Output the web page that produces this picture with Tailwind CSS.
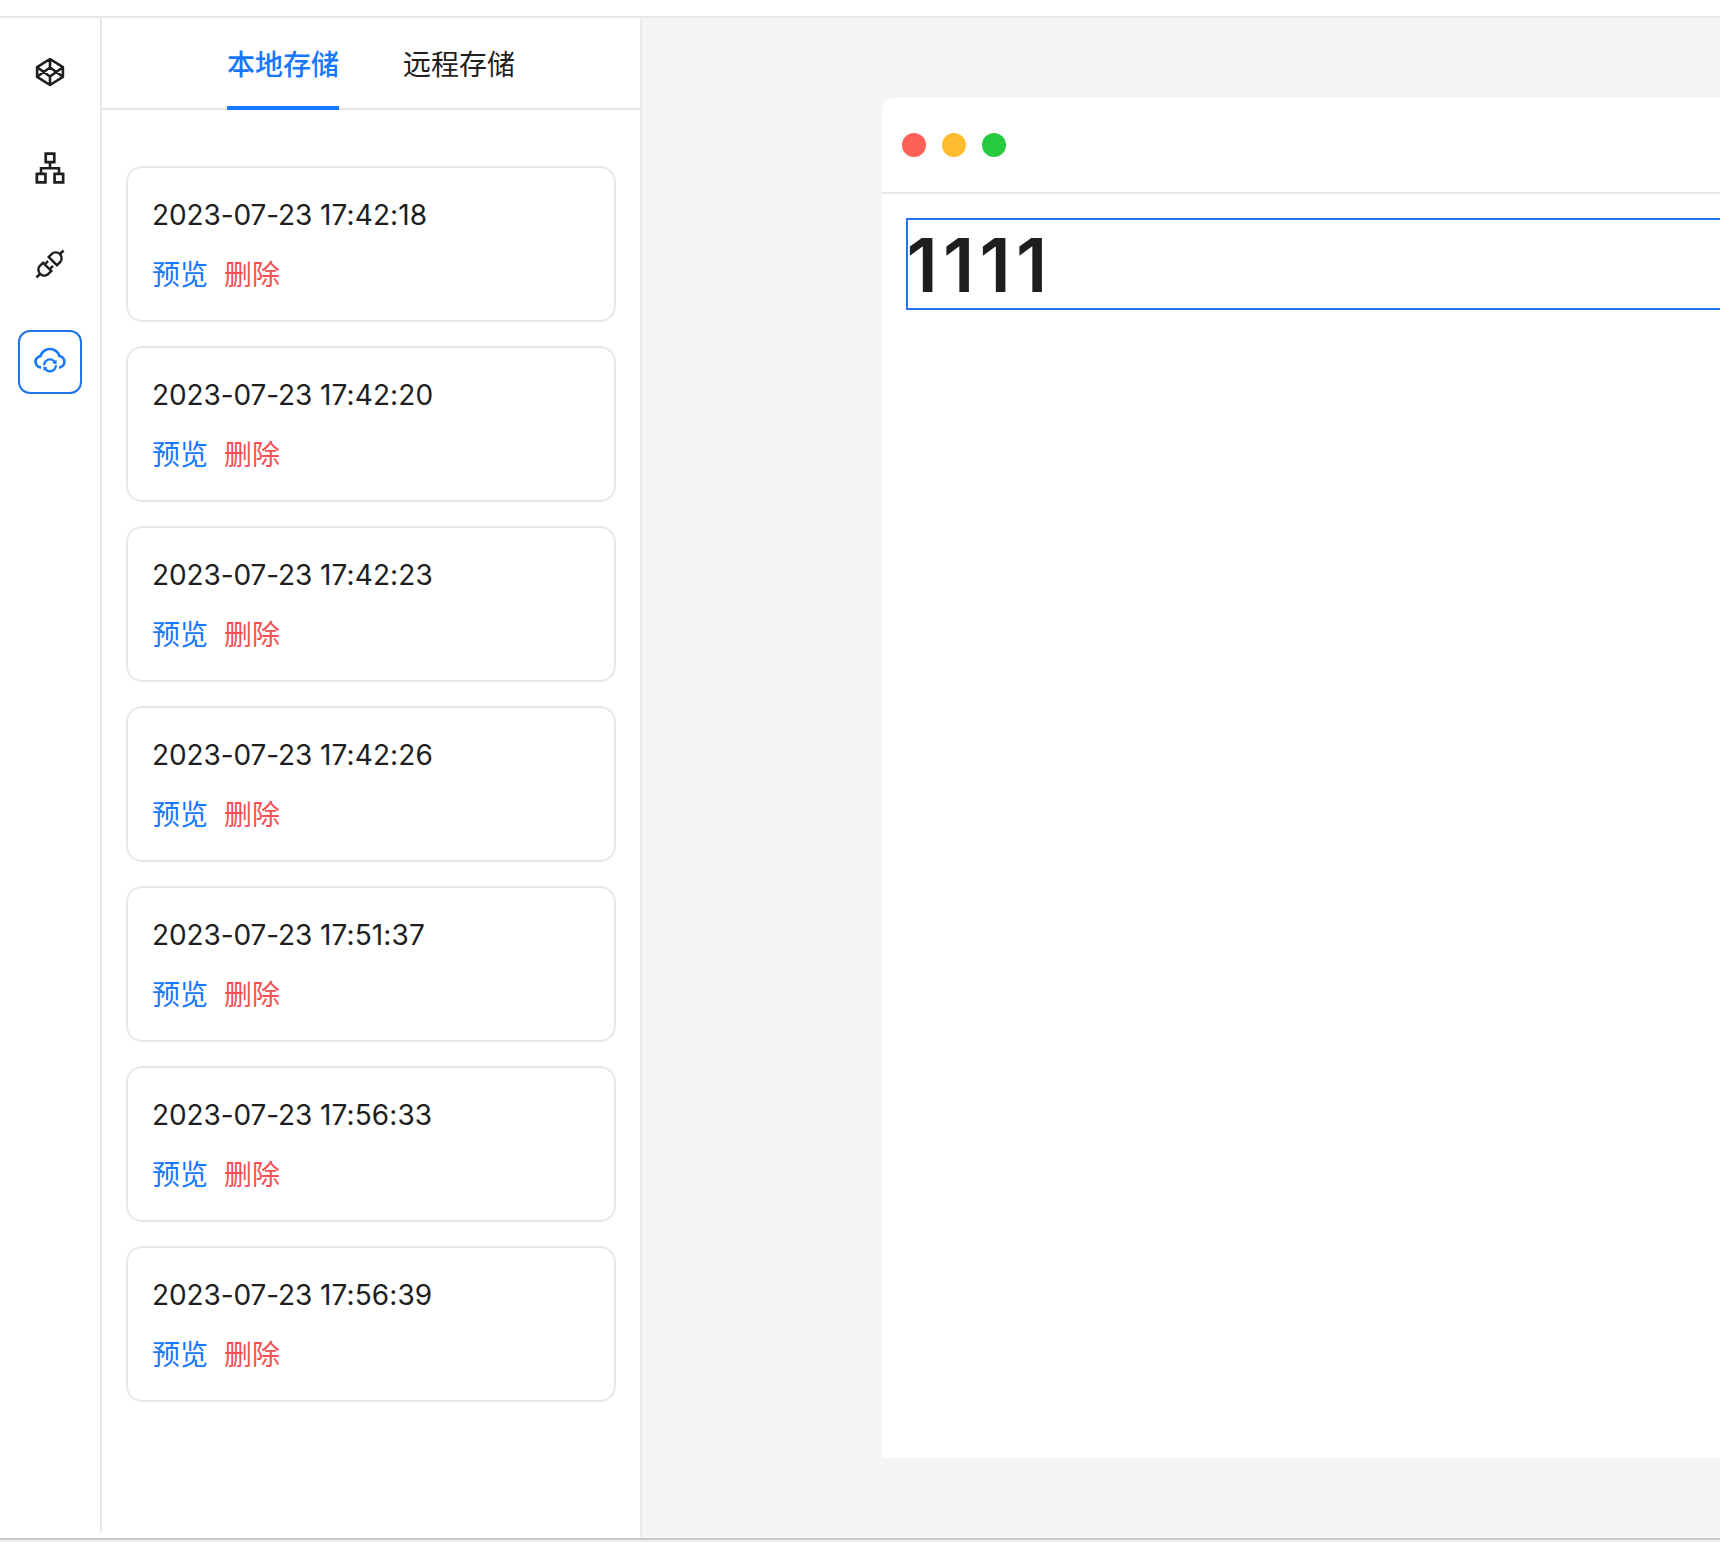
<!DOCTYPE html>
<html lang="zh-CN">
<head>
<meta charset="utf-8">
<title>Editor</title>
<script src="https://cdn.jsdelivr.net/npm/@tailwindcss/browser@4"></script>
</head>
<body class="bg-white">
<div class="flex h-[1542px] w-[1720px] flex-col overflow-hidden font-['Inter','Noto_Sans_CJK_SC',sans-serif] text-[#1e1e1e]">
  <header class="h-[18px] shrink-0 border-b-2 border-[#e8e8e8]"></header>
  <main class="flex min-h-0 flex-1">
    <nav class="flex h-[1514px] w-[102px] shrink-0 flex-col items-center gap-8 border-r-2 border-[#e8e8e8] pt-[22px]">
      <a class="flex size-16 items-center justify-center">
        <svg class="size-9" viewBox="0 0 36 36" fill="none" stroke="currentColor" stroke-width="2.6" stroke-linejoin="round"><path d="M18 5 30.900 13.200V22.800L18 31 5.100 22.800V13.200ZM18 5V13.500M18 22.500V31M5.100 13.200 18 22.500 30.900 13.200M5.100 22.800 18 13.500 30.900 22.800"/></svg>
      </a>
      <a class="flex size-16 items-center justify-center">
        <svg class="size-9" viewBox="0 0 1024 1024" fill="currentColor"><path d="M908 640H804V488c0-4.400-3.600-8-8-8H548v-96h108c8.800 0 16-7.200 16-16V80c0-8.800-7.200-16-16-16H368c-8.800 0-16 7.200-16 16v288c0 8.800 7.200 16 16 16h108v96H228c-4.400 0-8 3.600-8 8v152H116c-8.800 0-16 7.200-16 16v288c0 8.800 7.200 16 16 16h288c8.800 0 16-7.200 16-16V656c0-8.800-7.200-16-16-16H292v-88h440v88H620c-8.800 0-16 7.200-16 16v288c0 8.800 7.200 16 16 16h288c8.800 0 16-7.200 16-16V656c0-8.800-7.200-16-16-16zm-564 76v168H176V716h168zm84-408V140h168v168H428zm420 576H680V716h168v168z"/></svg>
      </a>
      <a class="flex size-16 items-center justify-center">
        <svg class="size-9" viewBox="0 0 1024 1024" fill="currentColor"><path d="M917.7 148.8l-42.4-42.4c-1.600-1.600-3.600-2.300-5.700-2.300s-4.100.8-5.700 2.300l-76.1 76.100a199.270 199.270 0 00-112.100-34.300c-51.200 0-102.400 19.500-141.500 58.600L432.300 308.700a8.030 8.030 0 000 11.300L704 591.700c1.600 1.600 3.600 2.300 5.700 2.300 2 0 4.100-.8 5.700-2.300l101.900-101.900c68.900-69 77-175.700 24.300-253.500l76.100-76.100c3.100-3.200 3.100-8.300 0-11.400zM769.100 441.700l-59.400 59.400-186.800-186.800 59.400-59.400c24.900-24.900 58.100-38.700 93.400-38.700 35.300 0 68.400 13.700 93.400 38.700 24.900 24.900 38.700 58.100 38.700 93.400 0 35.300-13.800 68.400-38.700 93.400zm-190.200 105a8.030 8.030 0 00-11.300 0L501 613.300 410.700 523l66.700-66.700c3.100-3.100 3.100-8.200 0-11.300L441 408.600a8.030 8.030 0 00-11.300 0L363 475.300l-43-43a7.850 7.850 0 00-5.700-2.300c-2 0-4.100.8-5.700 2.300L206.800 534.200c-68.900 69-77 175.700-24.300 253.500l-76.100 76.100a8.030 8.030 0 000 11.300l42.400 42.400c1.600 1.600 3.600 2.300 5.700 2.300s4.100-.8 5.700-2.300l76.100-76.100c33.700 22.900 72.900 34.300 112.100 34.300 51.200 0 102.400-19.500 141.500-58.600l101.900-101.900c3.100-3.100 3.100-8.200 0-11.300l-43-43 66.700-66.700c3.100-3.100 3.100-8.200 0-11.300l-36.600-36.200zM441.700 769.100a131.320 131.320 0 01-93.400 38.700c-35.300 0-68.400-13.700-93.400-38.700a131.320 131.320 0 01-38.700-93.400c0-35.300 13.700-68.400 38.700-93.400l59.400-59.400 186.800 186.800-59.400 59.400z"/></svg>
      </a>
      <a class="mt-0.5 flex size-16 items-center justify-center rounded-xl border-2 border-[#1f74e8] pb-1 text-[#1677ff]">
        <svg class="size-9" viewBox="0 0 1024 1024" fill="currentColor"><path d="M811.400 368.900C765.600 248 648.900 162 512.200 162S258.800 247.900 213 368.800C126.900 391.500 63.500 470.200 64 563.600 64.600 668 145.600 752.900 247.600 762c4.700.4 8.700-3.300 8.700-8v-60.400c0-4-3-7.400-7-7.900-27-3.400-52.500-15.200-72.100-34.500-24-23.500-37.200-55.100-37.200-88.600 0-28 9.100-54.400 26.200-76.400 16.700-21.400 40.200-36.900 66.100-43.700l37.900-10 13.900-36.700c8.600-22.800 20.600-44.200 35.700-63.500 14.900-19.200 32.600-36 52.400-50 41.100-28.900 89.500-44.200 140-44.200s98.900 15.300 140 44.300c19.900 14 37.500 30.800 52.400 50 15.100 19.300 27.100 40.700 35.700 63.500l13.800 36.600 37.800 10c54.200 14.400 92.100 63.700 92.100 120 0 33.600-13.200 65.100-37.200 88.600-19.500 19.200-44.900 31.100-71.900 34.500-4 .5-6.900 3.900-6.900 7.900V754c0 4.700 4.100 8.400 8.800 8 101.700-9.200 182.500-94 183.200-198.200.6-93.400-62.700-172.100-148.600-194.900z"/><path d="M376.900 656.400c1.800-33.500 15.700-64.700 39.500-88.600 25.400-25.500 60-39.800 96-39.800 36.200 0 70.300 14.100 96 39.800 1.400 1.400 2.700 2.800 4.100 4.300l-25 19.600a8 8 0 003 14.100l98.200 24c5 1.200 9.900-2.600 9.900-7.700l.5-101.300c0-6.700-7.600-10.500-12.900-6.300L663 532.700c-36.600-42-90.400-68.600-150.500-68.600-107.400 0-195 85.100-199.400 191.700-.2 4.500 3.400 8.300 8 8.300H369c4.200-.1 7.700-3.400 7.900-7.700zM703 664h-47.900c-4.200 0-7.700 3.300-8 7.600-1.800 33.500-15.700 64.700-39.500 88.600-25.400 25.500-60 39.800-96 39.800-36.200 0-70.300-14.100-96-39.800-1.400-1.400-2.700-2.800-4.100-4.300l25-19.600a8 8 0 00-3-14.100l-98.200-24c-5-1.200-9.900 2.600-9.900 7.700l-.4 101.400c0 6.700 7.600 10.500 12.900 6.300l23.200-18.200c36.600 42 90.400 68.600 150.500 68.600 107.400 0 195-85.100 199.400-191.700.2-4.500-3.400-8.300-8-8.300z"/></svg>
      </a>
    </nav>
    <section class="w-[540px] shrink-0 border-r-2 border-[#ebebeb]">
      <div class="flex h-[92px] gap-16 border-b-2 border-[#e8e8e8] pl-[125px] text-[28px] leading-[44px]">
        <div class="h-[92px] border-b-4 border-[#1677ff] pt-[25px] font-medium text-[#1677ff]">本地存储</div>
        <div class="h-[92px] pt-[25px]">远程存储</div>
      </div>
      <div id="records" class="flex flex-col gap-6 px-6 pt-14"></div>
    </section>
    <section class="flex-1 overflow-hidden bg-[#f5f5f5] pt-20 pl-60">
      <div class="h-[1360px] w-[900px] rounded-tl-xl bg-white">
        <div class="flex h-24 items-center gap-4 border-b-2 border-[#e8e8e8] pl-5">
          <i class="size-6 rounded-full bg-[#ff6157]"></i>
          <i class="size-6 rounded-full bg-[#febc2e]"></i>
          <i class="size-6 rounded-full bg-[#27c93f]"></i>
        </div>
        <div class="p-6">
          <div class="h-[92px] border-2 border-[#1f74e8]">
            <h1 class="-ml-[1.5px] pt-px text-[74px] leading-[88px] font-semibold tracking-[5.2px]">1111</h1>
          </div>
        </div>
      </div>
    </section>
  </main>
  <footer class="h-1 shrink-0 border-t-2 border-[#c9c9cc] bg-[#f0f0f2]"></footer>
</div>
<script>
  const times = ['17:42:18', '17:42:20', '17:42:23', '17:42:26', '17:51:37', '17:56:33', '17:56:39'];
  document.getElementById('records').innerHTML = times.map(t => `
    <article class="h-[156px] rounded-2xl border-2 border-[#e8e8e8] px-6 pt-[25px] text-[28px] leading-[44px]">
      <p><span class="tracking-[-0.1px]">2023-07-23 </span><span class="tracking-[0.1px]">${t}</span></p>
      <div class="mt-4 flex gap-4"><a class="text-[#1677ff]">预览</a><a class="text-[#f74f52]">删除</a></div>
    </article>`).join('');
</script>
</body>
</html>
